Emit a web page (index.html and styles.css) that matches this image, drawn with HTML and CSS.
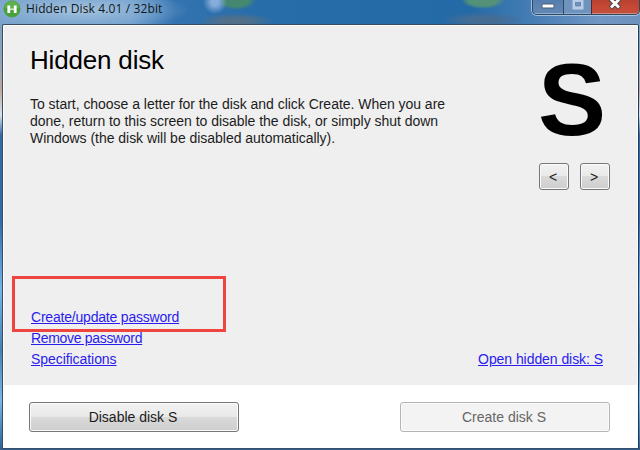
FILE: index.html
```html
<!DOCTYPE html>
<html lang="en">
<head>
<meta charset="UTF-8" />
<meta name="viewport" content="width=device-width, initial-scale=1.0" />
<title>Hidden Disk 4.01 / 32bit</title>
<link rel="stylesheet" href="styles.css">
</head>
<body>
  <div class="titlebar">
    <svg class="app-icon" width="18" height="18" viewBox="0 0 18 18">
      <circle cx="9" cy="9" r="8.5" fill="#4aa03c" />
      <path d="M1.5 8a7.5 7 0 0 1 15 0z" fill="#6fb95c" opacity="0.6" />
      <path d="M5.8 5.5v7.5M12.2 5.5v7.5" stroke="#fff" stroke-width="2.8" />
      <path d="M6 9.2h6" stroke="#e4f2df" stroke-width="1.4" />
    </svg>
    <span class="titlebar-text">Hidden Disk 4.01 / 32bit</span>
    <div class="window-controls">
      <span class="control minimize">
        <svg width="14" height="6" viewBox="0 0 14 6"><rect x="1" y="1" width="12" height="4" rx="1" fill="#fff" stroke="#4b5a70" /></svg>
      </span>
      <span class="control maximize">
        <svg width="12" height="12" viewBox="0 0 12 12"><rect x="2" y="0.5" width="8" height="7.5" fill="none" stroke="#b9cee6" stroke-width="3" /><rect x="3.5" y="2.5" width="5" height="3" fill="none" stroke="#6b89b0" /></svg>
      </span>
      <span class="control close">
        <svg width="14" height="14" viewBox="0 0 14 14"><path d="M2.5 2l9 9M11.5 2l-9 9" stroke="#4b4650" stroke-width="4.8" /><path d="M3 2.5l8 8M11 2.5l-8 8" stroke="#fff" stroke-width="2.8" /></svg>
      </span>
    </div>
  </div>

  <div class="window">
    <div class="content">
      <div class="top">
        <div class="intro">
          <h1>Hidden disk</h1>
          <p>
            <span class="line">To start, choose a letter for the disk and click Create. When you are</span>
            <span class="line">done, return to this screen to disable the disk, or simply shut down</span>
            <span class="line">Windows (the disk will be disabled automatically).</span>
          </p>
        </div>
        <div class="letter-picker">
          <div class="letter">S</div>
          <div class="arrows">
            <button class="btn arrow">&lt;</button>
            <button class="btn arrow">&gt;</button>
          </div>
        </div>
      </div>
      <div class="links">
        <div class="link-list">
          <a href="#" class="create-link">Create/update password</a>
          <a href="#" class="remove-link">Remove password</a>
          <a href="#" class="specs-link">Specifications</a>
        </div>
        <a href="#" class="open-link">Open hidden disk: S</a>
      </div>
    </div>
    <div class="footer">
      <button class="btn wide">Disable disk S</button>
      <button class="btn wide" disabled>Create disk S</button>
    </div>
  </div>
  <div class="highlight"></div>
</body>
</html>
```

FILE: styles.css
```css
* {
  box-sizing: border-box;
}

body {
  position: relative;
  width: 640px;
  height: 450px;
  margin: 0;
  overflow: hidden;
  display: flex;
  flex-direction: column;
  font-family: "Liberation Sans", Arial, sans-serif;
  font-size: 14px;
  color: #1c1c1c;
  background: linear-gradient(180deg, #6f9fcc 0, #8fa5b5 60px, #c0a999 90px, #d6e4ee 115px, #356ba5 135px, #2d6dad 220px, #72b5e8 290px, #4581b5 350px, #78b9e9 400px, #2c5f94 450px);
}

.titlebar {
  height: 24px;
  flex-shrink: 0;
  display: flex;
  align-items: flex-start;
  padding-left: 3px;
  background:
    radial-gradient(ellipse 110px 20px at 80px 10px, rgba(170, 198, 224, 0.9), rgba(150, 185, 218, 0.5) 55%, transparent),
    radial-gradient(circle 12px at 215px 2px, #86acdb 30%, transparent),
    radial-gradient(ellipse 20px 10px at 236px 0, #45876f 65%, transparent),
    radial-gradient(ellipse 38px 8px at 236px 21px, #526f89 35%, transparent),
    radial-gradient(ellipse 22px 9px at 483px 0, #539278 65%, transparent),
    radial-gradient(ellipse 42px 8px at 483px 20px, #456d94 35%, transparent),
    linear-gradient(90deg, #78a2cb 0, #6f9ecd 130px, #3373b0 175px, #276da9 260px, #236aa7 470px, #4b80b6 540px, #7197c5 600px, #6e91bd 640px);
}

.app-icon {
  flex-shrink: 0;
}

.titlebar-text {
  margin: 1px 0 0 5px;
  font-family: "Open Sans", "Noto Sans", sans-serif;
  font-size: 12px;
  line-height: 16px;
  letter-spacing: 0.13px;
  color: #111820;
  white-space: nowrap;
}

.window-controls {
  display: flex;
  width: 108px;
  height: 15px;
  margin-left: auto;
  border: 1px solid #34475f;
  border-top: 0;
  border-radius: 0 0 5px 5px;
  box-shadow: 0 0 0 1px rgba(180, 208, 235, 0.8);
  overflow: hidden;
}

.control {
  display: flex;
  justify-content: center;
  background: linear-gradient(#547eb0, #6488b4);
  box-shadow: inset 0 -1px 0 #8cafd4;
}

.minimize {
  width: 30px;
  padding-top: 3px;
}

.maximize {
  width: 28px;
  border-left: 1px solid #34475f;
  background: #6e93bf;
}

.close {
  flex: 1;
  border-left: 1px solid #5c2630;
  background: linear-gradient(#b84232, #c94935 60%, #bc5340);
  box-shadow: inset 0 -1px 0 #cf8b7e;
}

.close svg {
  margin: -3px 2px 0 0;
}

.window {
  width: 637px;
  height: 425px;
  margin-left: 2px;
  display: flex;
  flex-direction: column;
  border: 1px solid #3b4d62;
  border-right-color: #1e3b5e;
  border-radius: 2px 2px 0 0;
  background: #fff;
}

.content {
  height: 359px;
  margin: 1px 1px 0;
  padding: 0 27px 0 26px;
  display: flex;
  flex-direction: column;
  justify-content: space-between;
  background: #efefef;
}

.top {
  display: flex;
  justify-content: space-between;
}

h1 {
  margin: 19px 0 0;
  font-size: 26px;
  font-weight: normal;
  line-height: 30px;
  letter-spacing: -0.18px;
  color: #000;
}

p {
  margin: 21px 0 0;
  line-height: 17px;
  letter-spacing: -0.03px;
}

.line {
  display: block;
  white-space: nowrap;
}

.letter-picker {
  display: flex;
  flex-direction: column;
  align-items: flex-end;
}

.letter {
  margin: 24px 4px 0 0;
  font-size: 102px;
  font-weight: bold;
  line-height: 100px;
  color: #000;
}

.arrows {
  display: flex;
  gap: 11px;
  margin-top: 13px;
}

.btn {
  height: 30px;
  padding: 0;
  border: 1px solid #777;
  border-radius: 3px;
  box-shadow: inset 0 0 0 1px #fafafa;
  background: linear-gradient(#f2f2f2, #e9e9e9 48%, #dadada 50%, #cecece);
  font-family: inherit;
  font-size: 14px;
  color: #1c1c1c;
}

.btn:disabled {
  border-color: #b3b6b8;
  background: #f3f3f3;
  color: #666;
}

.arrow {
  width: 30px;
  height: 27px;
  padding-right: 2px;
}

.wide {
  width: 210px;
  padding-right: 2px;
}

.links {
  display: flex;
  justify-content: space-between;
  align-items: flex-end;
  padding: 0 7px 15px 1px;
}

.link-list {
  display: flex;
  flex-direction: column;
  align-items: flex-start;
}

a {
  color: #2a1cf0;
  line-height: 21px;
}

.create-link {
  letter-spacing: -0.2px;
}

.remove-link {
  letter-spacing: -0.32px;
}

.specs-link,
.open-link {
  letter-spacing: -0.06px;
}

.footer {
  display: flex;
  justify-content: space-between;
  padding: 17px 28px 0 26px;
}

/* red frame around the password link */
.highlight {
  position: absolute;
  left: 12px;
  top: 276px;
  width: 214px;
  height: 56px;
  border: 3px solid #ee4540;
}
```
